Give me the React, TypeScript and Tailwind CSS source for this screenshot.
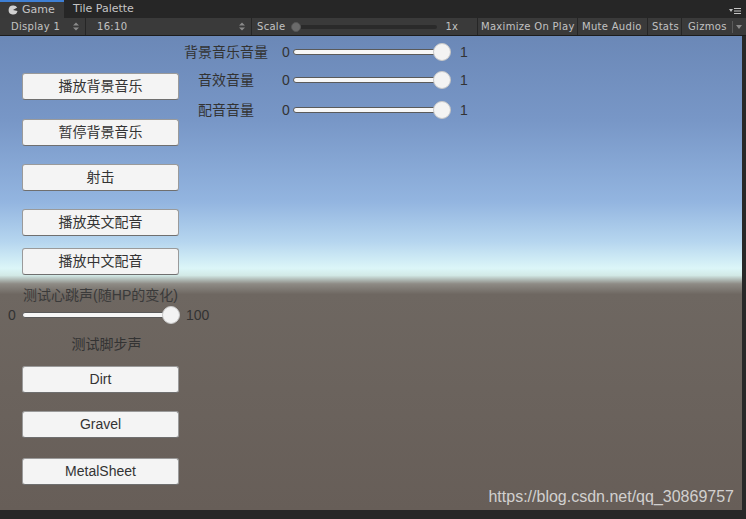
import React from "react";

const editorFont = { fontFamily: '"DejaVu Sans", "Liberation Sans", sans-serif' };
const uiFont = { fontFamily: '"Liberation Sans", "Noto Sans CJK SC", sans-serif' };

function UnityButton({ label, className = "" }: { label: string; className?: string }) {
  return (
    <div
      className={`ml-[22px] flex h-[27px] w-[157px] shrink-0 items-center justify-center rounded-[3px] border border-[#9a9a9a] border-b-[#6f6f6f] bg-[#f4f4f4] text-[14px] text-[#333] ${className}`}
    >
      {label}
    </div>
  );
}

function Track({ width }: { width: number }) {
  return (
    <div className="relative flex h-[18px] shrink-0 items-center" style={{ width }}>
      <div className="h-[6px] w-full rounded-full border border-[#5a5a5a] bg-[#f7f7f7]" />
      <div className="absolute right-0 top-0 h-[18px] w-[18px] rounded-full border border-[#c8c8c8] bg-[#f3f3f3]" />
    </div>
  );
}

function VolumeRow({ label, className = "" }: { label: string; className?: string }) {
  return (
    <div className={`flex h-[20px] items-center text-[14px] text-[#333] ${className}`}>
      <span className="w-[84px] text-center">{label}</span>
      <span className="ml-[14px] w-[11px]">0</span>
      <Track width={158} />
      <span className="ml-[9px]">1</span>
    </div>
  );
}

function ToolItem({ children, className = "" }: { children: React.ReactNode; className?: string }) {
  return (
    <div className={`flex h-full shrink-0 items-center whitespace-nowrap border-r border-[#262626] ${className}`}>
      {children}
    </div>
  );
}

function Arrows() {
  return (
    <svg width="6" height="9" viewBox="0 0 6 9" className="ml-auto">
      <path d="M0 3.5 L3 0.5 L6 3.5 Z M0 5.5 L3 8.5 L6 5.5 Z" fill="#8a8a8a" />
    </svg>
  );
}

export default function App() {
  return (
    <div className="flex h-[519px] w-[746px] flex-col overflow-hidden bg-[#282828]" style={editorFont}>
      {/* tab strip */}
      <div className="flex h-[18px] items-end bg-[#262626] text-[11px] text-[#c4c4c4]">
        <div className="flex h-[18px] w-[64px] items-center gap-[4px] border-t-2 border-[#3e7fd4] bg-[#393939] pl-[8px]">
          <svg width="10" height="10" viewBox="0 0 10 10">
            <path d="M5 0.5 A4.5 4.5 0 1 0 9.5 6 L5 5 L9.2 2.6 A4.5 4.5 0 0 0 5 0.5 Z" fill="#d0d0d0" />
          </svg>
          <span>Game</span>
        </div>
        <div className="flex h-[18px] items-center pl-[9px]">Tile Palette</div>
        <div className="ml-auto mr-[5px] flex h-[18px] items-center pt-[4px]">
          <svg width="12" height="8" viewBox="0 0 12 8">
            <path d="M0 2 L2 5 L4 2 Z" fill="#c4c4c4" />
            <rect x="5" y="1" width="7" height="1" fill="#c4c4c4" />
            <rect x="5" y="3.5" width="7" height="1" fill="#c4c4c4" />
            <rect x="5" y="6" width="7" height="1" fill="#c4c4c4" />
          </svg>
        </div>
      </div>

      {/* toolbar */}
      <div className="flex h-[18px] items-center border-b border-[#1c1c1c] bg-[#3a3a3a] text-[10px] tracking-[0.3px] text-[#c2c2c2]">
        <ToolItem className="w-[86px] pl-[11px] pr-[6px]">
          <span>Display 1</span>
          <Arrows />
        </ToolItem>
        <ToolItem className="w-[166px] pl-[11px] pr-[6px]">
          <span>16:10</span>
          <Arrows />
        </ToolItem>
        <ToolItem className="w-[226px] pl-[5px]">
          <span>Scale</span>
          <div className="relative ml-[6px] flex h-[10px] w-[146px] items-center">
            <div className="h-[4px] w-full rounded-full bg-[#2a2a2a]" />
            <div className="absolute left-0 h-[10px] w-[10px] rounded-full border border-[#555] bg-[#6a6a6a]" />
          </div>
          <span className="ml-[8px]">1x</span>
        </ToolItem>
        <ToolItem className="w-[100px] pl-[3px]">Maximize On Play</ToolItem>
        <ToolItem className="w-[70px] pl-[4px]">Mute Audio</ToolItem>
        <ToolItem className="w-[34px] pl-[4px]">Stats</ToolItem>
        <div className="flex h-full shrink-0 items-center whitespace-nowrap pl-[6px]">
          <span>Gizmos</span>
          <span className="ml-[5px] h-[12px] border-l border-[#5a5a5a]" />
          <svg width="6" height="4" viewBox="0 0 6 4" className="ml-[3px]">
            <path d="M0 0 L6 0 L3 4 Z" fill="#8a8a8a" />
          </svg>
        </div>
      </div>

      {/* game view */}
      <div className="flex h-[474px] w-[742px]">
        <div
          className="relative flex h-full w-full bg-[linear-gradient(180deg,#6b88b7_0%,#7897c7_18%,#93b5e0_35%,#b6d6ef_43.5%,#dcf6f8_49%,#d2e9e6_50.5%,#8e8b85_52.3%,#6e6761_54.5%,#675e58_100%)]"
          style={uiFont}
        >
          <div className="flex w-[184px] shrink-0 flex-col">
            <UnityButton label="播放背景音乐" className="mt-[37px]" />
            <UnityButton label="暂停背景音乐" className="mt-[19px]" />
            <UnityButton label="射击" className="mt-[18px]" />
            <UnityButton label="播放英文配音" className="mt-[18px]" />
            <UnityButton label="播放中文配音" className="mt-[12px]" />
            <div className="ml-[22px] mt-[10px] h-[20px] w-[157px] whitespace-nowrap text-center text-[14px] leading-[20px] text-[#3a3a3a]">
              测试心跳声(随HP的变化)
            </div>
            <div className="mt-[1px] flex h-[18px] w-max items-center text-[14px] text-[#333]">
              <span className="w-[22px] pl-[8px]">0</span>
              <Track width={158} />
              <span className="ml-[6px]">100</span>
            </div>
            <div className="ml-[34px] mt-[10px] h-[20px] w-[145px] text-center text-[14px] leading-[20px] text-[#333]">
              测试脚步声
            </div>
            <UnityButton label="Dirt" className="mt-[12px]" />
            <UnityButton label="Gravel" className="mt-[18px]" />
            <UnityButton label="MetalSheet" className="mt-[20px]" />
          </div>

          <div className="flex flex-col">
            <VolumeRow label="背景音乐音量" className="mt-[6px]" />
            <VolumeRow label="音效音量" className="mt-[8px]" />
            <VolumeRow label="配音音量" className="mt-[10px]" />
          </div>

          <div className="absolute bottom-[1px] right-[8px] text-[16px] text-[#e6e6e6]/85" style={uiFont}>
            https://blog.csdn.net/qq_30869757
          </div>
        </div>
      </div>
    </div>
  );
}
